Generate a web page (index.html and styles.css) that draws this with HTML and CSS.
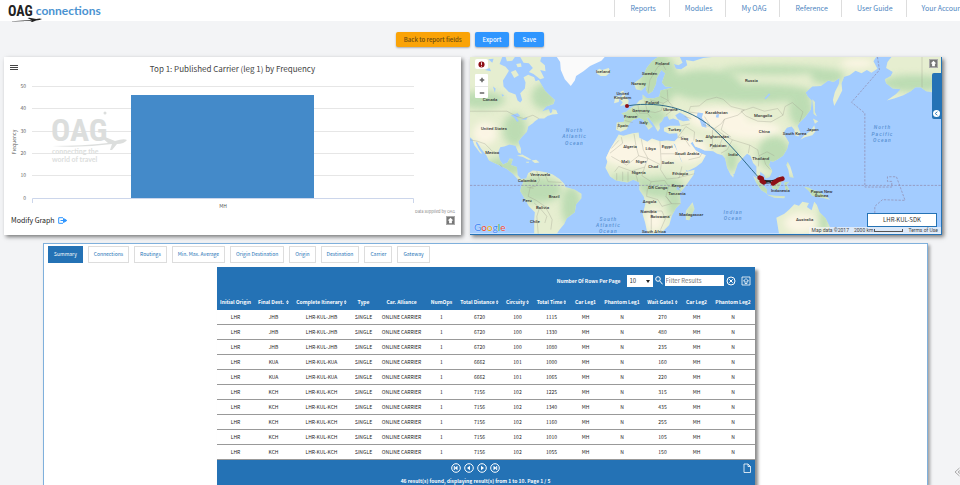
FILE: index.html
```html
<!DOCTYPE html>
<html lang="en">
  <head>
    <meta charset="UTF-8" />
    <meta name="viewport" content="width=device-width, initial-scale=1.0" />
    <title>OAG Connections</title>
    <link rel="stylesheet" href="styles.css">
  </head>
  <body>
    <header class="site-header">
      <a class="logo" href="#">
        <span class="logo-oag">OAG</span>
        <span class="logo-name">connections</span>
        <svg class="logo-plane" viewBox="0 0 36 5"><path d="M0 4.5 L24 3 L20 1 L22 .8 L29 2 Q33 1 35 2 Q33 3.500 29 3.500 L25 5 L23 5 L25 3.700 Z" /></svg>
      </a>
      <nav class="main-nav">
        <a href="#">Reports</a>
        <a href="#">Modules</a>
        <a href="#">My OAG</a>
        <a href="#">Reference</a>
        <a href="#">User Guide</a>
        <a href="#">Your Account</a>
      </nav>
    </header>

    <main>
      <div class="toolbar">
        <button class="btn btn-back" type="button">Back to report fields</button>
        <button class="btn" type="button">Export</button>
        <button class="btn" type="button">Save</button>
      </div>

      <div class="panels">
        <section class="card chart-card">
          <div class="chart-head">
            <button class="menu-btn" type="button" aria-label="Chart menu"><span></span><span></span><span></span></button>
            <h2>Top 1: Published Carrier (leg 1) by Frequency</h2>
          </div>
          <svg class="chart" viewBox="0 0 457 136">
            <g class="grid-lines">
              <path d="M28 7.500H410M28 29.500H410M28 52.500H410M28 74.500H410M28 96.500H410" />
            </g>
            <g class="watermark">
              <text class="wm-oag" x="47" y="62">OAG</text>
              <circle cx="101" cy="34" r="1.500" />
              <path d="M48 67 Q80 67 104 64 L97 58 L101 58 L111 62 Q120 59 123 61 Q120 65 113 65 L108 71 L106 71 L108 65 Q78 69 48 67Z" />
              <text class="wm-line" x="48" y="75">connecting the</text>
              <text class="wm-line" x="48" y="83">world of travel</text>
            </g>
            <rect class="bar" x="127" y="16" width="183" height="103" />
            <path class="axis" d="M28.500 124V119.500H409.500V124" />
            <g class="y-labels">
              <text x="22" y="9">50</text>
              <text x="22" y="31">40</text>
              <text x="22" y="54">30</text>
              <text x="22" y="76">20</text>
              <text x="22" y="98">10</text>
              <text x="22" y="121">0</text>
            </g>
            <text class="x-label" x="219" y="129">MH</text>
            <text class="y-title" transform="translate(12 63) rotate(-90)">Frequency</text>
            <text class="credit" x="451" y="134">Data supplied by OAG</text>
          </svg>
          <div class="chart-foot">
            <a class="modify" href="#">Modify Graph
              <svg viewBox="0 0 9 7"><path d="M5 .7H.7V6.300H5M2.500 3.500H6" /><path class="fill" d="M5.500 1.500L8.800 3.500L5.500 5.500Z" /></svg>
            </a>
            <button class="up-btn" type="button" aria-label="Move up">
              <svg viewBox="0 0 10 10"><path d="M5 1L9 5H7V9H3V5H1Z" /></svg>
            </button>
          </div>
        </section>

        <section class="card map-card">
          <svg class="map" viewBox="15 21 1416 531" preserveAspectRatio="xMidYMid slice">
            <defs>
              <filter id="soft" x="-10%" y="-10%" width="120%" height="120%"><feGaussianBlur stdDeviation="11" /></filter>
              <g id="land">
                <!-- Americas -->
                <path d="M15 21H112L104 42L122 50L132 62L124 76L114 92L116 110L132 126L152 134L158 152L166 158L172 150L166 130L180 116L182 98L176 82L190 74L208 82L212 94L222 90L230 104L240 122L252 134L270 150L266 162L244 170L232 184L252 178L256 190L272 180L279 192L262 194L248 198L238 206L222 206L210 214L204 220L190 230L186 246L170 262L160 276L168 296L168 312L160 308L152 288L134 284L118 290L106 292L100 306L104 330L114 344L128 338L134 326L144 328L138 346L156 352L158 376L168 388L184 386L190 370L204 362L222 364L246 368L264 374L284 388L298 402L302 412L330 420L350 432L350 446L334 464L330 488L306 506L298 524L284 540L276 552H208L208 510L210 488L192 470L180 448L166 424L170 408L176 396L160 390L144 372L126 358L98 344L72 332L64 316L48 296L36 276L32 278L42 298L52 312L46 310L28 286L22 268L15 262Z" />
                <path d="M122 21H150L142 32L126 34ZM166 21H230L226 34L240 46L242 64L226 60L238 84L226 88L206 72L192 66L204 54L192 40L176 38ZM138 66L152 60L162 76L148 84ZM154 42L168 40L170 50L158 52ZM262 178L274 180L278 192L262 190Z" />
                <path d="M156 318L172 314L190 324L200 330L190 330L174 322ZM200 332L214 330L224 338L210 340ZM184 336H192V339H184Z" />
                <!-- Europe, Asia and Africa -->
                <path d="M580 21H646L654 38L642 46L628 42L634 56L650 58L668 46L664 30L686 34L716 24L742 21H1236L1228 34L1240 56L1222 68L1208 60L1192 70L1174 62L1156 76L1140 80L1132 100L1134 122L1122 146L1110 168L1106 150L1112 126L1124 102L1126 84L1108 96L1092 92L1070 108L1044 110L1024 128L1030 140L1042 152L1040 178L1022 202L1006 218L1000 228L1008 248L1002 260L992 256L990 240L982 230L968 234L960 244L962 258L974 278L968 298L956 318L938 330L926 336L918 334L914 346L924 364L916 382L904 386L900 376L888 366L886 380L894 400L884 398L876 380L876 350L866 340L858 318L848 312L838 322L820 342L810 372L800 378L788 354L782 326L774 316L758 312L746 304L720 302L708 296L692 290L684 276L678 280L694 302L708 310L724 316L712 338L694 352L670 364L660 358L650 330L638 302L632 284L626 280L638 304L648 330L660 352L666 366L690 360L688 374L662 410L646 430L648 462L634 476L622 498L614 526L592 548L560 552L548 550L542 520L534 494L542 464L538 442L524 420L524 398L506 390L488 398L454 392L436 380L422 354L428 336L424 324L436 298L446 282L462 254L476 258L504 250L522 248L524 264L548 276L562 266L586 274L606 272L630 274L640 264L638 250L614 252L598 244L598 234L616 228L648 228L642 212L626 206L614 210L608 198L598 202L592 214L584 222L586 236L580 246L574 236L564 218L552 204L546 204L554 218L564 230L552 240L544 228L536 210L524 204L506 210L496 218L486 238L468 246L454 240L456 218L478 216L480 198L470 190L484 186L498 174L514 164L524 152L534 148L534 134L546 144L566 146L584 140L588 122L602 118L626 112L602 110L592 98L602 70L590 60L576 86L574 102L564 124L552 132L544 120L546 106L530 122L514 118L508 100L534 80L546 54L562 34Z" />
                <path d="M466 148L474 132L466 126L476 122L484 142L492 152L490 164L466 168L474 158ZM452 140L466 138L462 156L448 160Z" />
                <path d="M394 62L404 56L412 60L432 54L438 66L424 78L408 78L398 72Z" />
                <path d="M684 458L690 478L674 512L664 510L664 484Z" />
                <!-- South-east Asia, Japan, Australia -->
                <path d="M866 378L882 390L908 420L908 432L892 422L876 400ZM922 400L938 390L946 378L954 386L948 406L940 420L924 416ZM906 434L930 438L962 440L960 446L930 444ZM960 398L974 396L966 404L974 420L964 420ZM970 336L978 350L984 370L988 384L976 382L972 360L966 346ZM1020 412L1034 414L1044 420L1060 424L1084 440L1098 450L1080 446L1062 442L1044 438L1034 424ZM1046 206L1062 214L1052 222ZM1050 226L1054 244L1044 256L1022 262L1008 270L1020 256L1038 244ZM1044 148L1052 156L1052 186L1058 200L1048 192ZM800 374L808 376L806 384Z" />
                <path d="M936 504L960 492L974 480L990 464L1004 468L1014 456L1034 460L1028 472L1042 482L1050 456L1058 466L1066 488L1084 506L1096 530L1094 552H944Z" />
                <!-- Alaska -->
                <path d="M1282 21H1431V152L1416 138L1402 126L1386 124L1370 112L1354 112L1340 124L1318 136L1290 146L1268 152L1296 132L1310 118L1286 116L1266 100L1262 88L1280 78L1286 66L1266 54L1270 36Z" />
              </g>
              <mask id="landMask" maskUnits="userSpaceOnUse" x="15" y="21" width="1416" height="531"><use href="#land" fill="#fff" /></mask>
            </defs>

            <rect class="sea" x="15" y="21" width="1416" height="531" />
            <use class="land" href="#land" />
            <g mask="url(#landMask)">
              <g class="desert" filter="url(#soft)">
                <ellipse cx="520" cy="310" rx="120" ry="42" />
                <ellipse cx="670" cy="300" rx="60" ry="40" />
                <ellipse cx="760" cy="205" rx="90" ry="34" />
                <ellipse cx="860" cy="240" rx="90" ry="28" />
                <ellipse cx="60" cy="250" rx="36" ry="34" />
                <ellipse cx="570" cy="510" rx="26" ry="34" />
                <ellipse cx="1010" cy="520" rx="50" ry="30" />
                <ellipse cx="1180" cy="40" rx="50" ry="14" />
              </g>
              <g class="forest" filter="url(#soft)">
                <ellipse cx="50" cy="150" rx="70" ry="26" />
                <ellipse cx="150" cy="240" rx="36" ry="50" />
                <ellipse cx="240" cy="140" rx="40" ry="40" />
                <ellipse cx="120" cy="350" rx="60" ry="30" />
                <ellipse cx="220" cy="420" rx="70" ry="40" />
                <ellipse cx="320" cy="470" rx="30" ry="60" />
                <ellipse cx="590" cy="412" rx="70" ry="32" />
                <ellipse cx="490" cy="387" rx="60" ry="12" />
                <ellipse cx="630" cy="460" rx="22" ry="40" />
                <ellipse cx="530" cy="200" rx="80" ry="30" />
                <ellipse cx="580" cy="90" rx="60" ry="80" />
                <ellipse cx="720" cy="105" rx="110" ry="45" />
                <ellipse cx="880" cy="130" rx="170" ry="28" />
                <ellipse cx="930" cy="60" rx="160" ry="14" />
                <ellipse cx="930" cy="310" rx="50" ry="50" />
                <ellipse cx="1010" cy="180" rx="36" ry="50" />
                <ellipse cx="1090" cy="80" rx="50" ry="24" />
                <ellipse cx="800" cy="330" rx="20" ry="40" />
                <ellipse cx="940" cy="410" rx="90" ry="30" />
                <ellipse cx="1060" cy="430" rx="40" ry="20" />
                <ellipse cx="1350" cy="100" rx="100" ry="26" />
                <ellipse cx="1080" cy="510" rx="14" ry="50" />
                <ellipse cx="680" cy="490" rx="12" ry="30" />
              </g>
            </g>
            <path class="ice" d="M276 21L286 36L288 60L300 88L318 108L330 92L334 78L356 64L376 48L410 32L420 21Z" />
            <!-- Inland seas and lakes -->
            <path class="sea" d="M632 196L646 188L664 198L676 212L656 214L640 208ZM700 188L716 190L712 204L724 220L726 234L712 230L706 212L696 200ZM138 196L158 190L166 198L154 202L162 214L156 216L148 204ZM168 210L188 202L184 210ZM756 194L764 192L762 204L754 202ZM636 412L646 410L644 422L636 420ZM110 132L118 136L112 140ZM900 146L914 130L918 134L904 148ZM30 40L44 34L48 46L36 50ZM60 60L74 54L78 64ZM40 90L56 84L58 90ZM84 110L92 116L90 128ZM70 28L86 26L82 38Z" />
            <path class="borders" d="M15 184H126L156 200L176 206L204 196L222 206M15 270L36 274L60 282L78 300L90 312M104 344L112 352M216 364L224 392L212 410L196 412L190 440L214 452L240 470L252 490L262 510L258 540M186 412L206 416M240 372L250 396L290 398M208 460L224 474L216 500L220 552M224 474L246 500L240 520M462 272L440 296M470 262L474 280L436 310M440 320L486 346L522 318L514 288L508 252M522 318L550 326L586 344M530 268L536 300L550 326L540 352L500 364L462 350L450 366M586 274L590 340L588 360M590 312H640M540 352L532 378L560 396L600 392M588 360L606 388L644 384L652 350M456 370V392M474 366V394M490 366V396M510 362L520 396M560 396L548 420L546 440L580 450L592 470M600 392L612 410L604 440L622 462M612 410H634L650 426M604 440L620 462H648M542 484H592L602 508L588 540M560 486V540M592 470L620 462M592 504L620 496M640 384L690 372M640 264L656 260L676 290M640 262L664 230L690 246L688 272M650 228L676 222M672 330L706 322L712 310M458 238L462 218M480 212L504 218M502 174L520 196L516 206M520 166L524 190M540 152L548 184L572 188M524 190L548 190L560 204M556 150L596 160L590 182L572 188M588 140L608 150L630 176L604 196M596 160L614 150M608 120L610 150M550 130L556 90L580 50L600 40M590 36L604 60M660 200L680 206M700 190L672 186L678 170L704 168L726 150L756 142L776 148L800 170L840 180M736 226L720 200M716 224L750 236L770 222L780 208L820 196L840 180M744 240V296M750 236L778 256L764 290L740 296M778 256L804 270L788 300L770 310M804 270L856 286L852 310M830 184L866 172L900 184L940 176L956 196L920 216L880 214L844 198L830 184M956 196L962 170L984 158L1016 186L1006 216M856 286L880 300L884 318L908 306L930 318M884 318L882 350M896 320L904 344L918 360M780 208L770 240L800 262M1056 424V440M930 402L946 404M1374 21V112" />
            <path class="equator" d="M15 407H1431" />
            <path class="dateline" d="M1240 21L1246 60L1162 157L1202 190V412H1283V395H1270V381H1297L1323 452L1255 450L1232 470V490" />
            <path class="route" d="M487 168C600 150 690 185 750 240S860 360 885 385" />
            <path class="hop" d="M898 397L950 388M898 400L930 398L956 388M890 390L920 396" />
            <g class="stops">
              <circle cx="487" cy="168" r="6" />
              <path d="M886 384L892 386L892 394L898 398M926 401L936 394L942 390L954 387" />
            </g>

            <g class="places">
              <text x="75" y="152">Canada</text>
              <text x="87" y="240">United States</text>
              <text x="82" y="314">Mexico</text>
              <text x="226" y="380">Venezuela</text>
              <text x="187" y="396">Colombia</text>
              <text x="268" y="445">Brazil</text>
              <text x="187" y="456">Peru</text>
              <text x="233" y="478">Bolivia</text>
              <text x="210" y="521">Chile</text>
              <text x="415" y="70">Iceland</text>
              <text x="593" y="45">Finland</text>
              <text x="555" y="74">Sweden</text>
              <text x="522" y="104">Norway</text>
              <text x="474" y="135">United</text>
              <text x="474" y="148">Kingdom</text>
              <text x="563" y="163">Poland</text>
              <text x="529" y="186">Germany</text>
              <text x="618" y="184">Ukraine</text>
              <text x="498" y="205">France</text>
              <text x="475" y="230">Spain</text>
              <text x="537" y="221">Italy</text>
              <text x="630" y="244">Turkey</text>
              <text x="660" y="272">Iraq</text>
              <text x="704" y="278">Iran</text>
              <text x="496" y="296">Algeria</text>
              <text x="558" y="300">Libya</text>
              <text x="608" y="295">Egypt</text>
              <text x="668" y="315">Saudi Arabia</text>
              <text x="482" y="340">Mali</text>
              <text x="529" y="341">Niger</text>
              <text x="566" y="355">Chad</text>
              <text x="610" y="343">Sudan</text>
              <text x="522" y="374">Nigeria</text>
              <text x="647" y="377">Ethiopia</text>
              <text x="580" y="419">DR Congo</text>
              <text x="639" y="411">Kenya</text>
              <text x="637" y="437">Tanzania</text>
              <text x="555" y="461">Angola</text>
              <text x="552" y="489">Namibia</text>
              <text x="586" y="506">Botswana</text>
              <text x="680" y="498">Madagascar</text>
              <text x="568" y="550">South Africa</text>
              <text x="861" y="95">Russia</text>
              <text x="756" y="192">Kazakhstan</text>
              <text x="896" y="200">Mongolia</text>
              <text x="900" y="251">China</text>
              <text x="991" y="257">South Korea</text>
              <text x="1045" y="243">Japan</text>
              <text x="758" y="266">Afghanistan</text>
              <text x="761" y="291">Pakistan</text>
              <text x="806" y="318">India</text>
              <text x="889" y="330">Thailand</text>
              <text x="948" y="428">Indonesia</text>
              <text x="1072" y="430">Papua New</text>
              <text x="1072" y="442">Guinea</text>
              <text x="1021" y="514">Australia</text>
            </g>
            <g class="oceans">
              <text x="329" y="247">North</text>
              <text x="329" y="266">Atlantic</text>
              <text x="329" y="285">Ocean</text>
              <text x="431" y="513">South</text>
              <text x="431" y="532">Atlantic</text>
              <text x="431" y="550">Ocean</text>
              <text x="806" y="493">Indian</text>
              <text x="806" y="512">Ocean</text>
              <text x="1255" y="239">North</text>
              <text x="1255" y="258">Pacific</text>
              <text x="1255" y="277">Ocean</text>
            </g>
          </svg>

          <div class="map-controls">
            <button class="map-btn" type="button" aria-label="Alerts">
              <svg viewBox="0 0 8 8"><circle cx="4" cy="4" r="3.500" fill="#8e1016" /><path d="M4 1.500V4.500M4 5.500V6.500" stroke="#fff" /></svg>
            </button>
            <div class="zoom-group">
              <button type="button" aria-label="Zoom in"><svg viewBox="0 0 8 8"><path d="M1 4H7M4 1V7" /></svg></button>
              <button type="button" aria-label="Zoom out"><svg viewBox="0 0 8 8"><path d="M1 4H7" /></svg></button>
            </div>
          </div>
          <button class="up-btn map-up" type="button" aria-label="Move up">
            <svg viewBox="0 0 10 10"><path d="M5 1L9 5H7V9H3V5H1Z" /></svg>
          </button>
          <button class="drawer" type="button" aria-label="Open map options">
            <svg viewBox="0 0 8 8"><circle cx="4" cy="4" r="4" fill="#fff" /><path d="M5 2L2.500 4L5 6" fill="none" stroke="#2472b5" /></svg>
          </button>
          <div class="google"><span class="g-blue">G</span><span class="g-red">o</span><span class="g-yellow">o</span><span class="g-blue">g</span><span class="g-green">l</span><span class="g-red">e</span></div>
          <div class="route-label">LHR-KUL-SDK</div>
          <div class="map-credit">
            <span>Map data ©2017</span>
            <span class="scale">2000 km <i></i></span>
            <a href="#">Terms of Use</a>
          </div>
        </section>
      </div>

      <section class="results">
        <div class="tabs">
          <button class="tab active" type="button">Summary</button>
          <button class="tab" type="button">Connections</button>
          <button class="tab" type="button">Routings</button>
          <button class="tab" type="button">Min. Max. Average</button>
          <button class="tab" type="button">Origin Destination</button>
          <button class="tab" type="button">Origin</button>
          <button class="tab" type="button">Destination</button>
          <button class="tab" type="button">Carrier</button>
          <button class="tab" type="button">Gateway</button>
        </div>

        <div class="table-box">
          <div class="table-tools">
            <label for="rows">Number Of Rows Per Page</label>
            <span class="select-wrap">
              <select id="rows"><option>10</option><option>25</option><option>50</option></select>
            </span>
            <label class="search-label" for="filter" aria-label="Filter results">
              <svg viewBox="0 0 8 9"><circle cx="3" cy="3" r="2.300" /><path d="M4.800 5L7.500 8.300" /></svg>
            </label>
            <input id="filter" type="text" placeholder="Filter Results" />
            <button class="icon-btn clear" type="button" aria-label="Clear filter">
              <svg viewBox="0 0 10 10"><circle cx="5" cy="5" r="4" /><path d="M3.300 3.300L6.700 6.700M6.700 3.300L3.300 6.700" /></svg>
            </button>
            <button class="icon-btn" type="button" aria-label="Move up">
              <svg viewBox="0 0 10 10"><path class="thin" d="M1 1H9V9H1ZM5 2.500L7.500 5H6V7.500H4V5H2.500Z" /></svg>
            </button>
          </div>

          <table>
            <thead>
              <tr>
                <th>Initial Origin</th>
                <th>Final Dest. <i></i></th>
                <th>Complete Itinerary<i></i></th>
                <th>Type</th>
                <th>Car. Alliance</th>
                <th>NumOps</th>
                <th>Total Distance<i></i></th>
                <th>Circuity<i></i></th>
                <th>Total Time<i></i></th>
                <th>Car Leg1</th>
                <th>Phantom Leg1</th>
                <th>Wait Gate1<i></i></th>
                <th>Car Leg2</th>
                <th>Phantom Leg2</th>
              </tr>
            </thead>
            <tbody>
              <tr><td>LHR</td><td>JHB</td><td>LHR-KUL-JHB</td><td>SINGLE</td><td>ONLINE CARRIER</td><td>1</td><td>6720</td><td>100</td><td>1115</td><td>MH</td><td>N</td><td>270</td><td>MH</td><td>N</td></tr>
              <tr><td>LHR</td><td>JHB</td><td>LHR-KUL-JHB</td><td>SINGLE</td><td>ONLINE CARRIER</td><td>1</td><td>6720</td><td>100</td><td>1330</td><td>MH</td><td>N</td><td>480</td><td>MH</td><td>N</td></tr>
              <tr><td>LHR</td><td>JHB</td><td>LHR-KUL-JHB</td><td>SINGLE</td><td>ONLINE CARRIER</td><td>1</td><td>6720</td><td>100</td><td>1080</td><td>MH</td><td>N</td><td>235</td><td>MH</td><td>N</td></tr>
              <tr><td>LHR</td><td>KUA</td><td>LHR-KUL-KUA</td><td>SINGLE</td><td>ONLINE CARRIER</td><td>1</td><td>6662</td><td>101</td><td>1000</td><td>MH</td><td>N</td><td>160</td><td>MH</td><td>N</td></tr>
              <tr><td>LHR</td><td>KUA</td><td>LHR-KUL-KUA</td><td>SINGLE</td><td>ONLINE CARRIER</td><td>1</td><td>6662</td><td>101</td><td>1065</td><td>MH</td><td>N</td><td>220</td><td>MH</td><td>N</td></tr>
              <tr><td>LHR</td><td>KCH</td><td>LHR-KUL-KCH</td><td>SINGLE</td><td>ONLINE CARRIER</td><td>1</td><td>7156</td><td>102</td><td>1225</td><td>MH</td><td>N</td><td>315</td><td>MH</td><td>N</td></tr>
              <tr><td>LHR</td><td>KCH</td><td>LHR-KUL-KCH</td><td>SINGLE</td><td>ONLINE CARRIER</td><td>1</td><td>7156</td><td>102</td><td>1340</td><td>MH</td><td>N</td><td>435</td><td>MH</td><td>N</td></tr>
              <tr><td>LHR</td><td>KCH</td><td>LHR-KUL-KCH</td><td>SINGLE</td><td>ONLINE CARRIER</td><td>1</td><td>7156</td><td>102</td><td>1160</td><td>MH</td><td>N</td><td>255</td><td>MH</td><td>N</td></tr>
              <tr><td>LHR</td><td>KCH</td><td>LHR-KUL-KCH</td><td>SINGLE</td><td>ONLINE CARRIER</td><td>1</td><td>7156</td><td>102</td><td>1010</td><td>MH</td><td>N</td><td>105</td><td>MH</td><td>N</td></tr>
              <tr><td>LHR</td><td>KCH</td><td>LHR-KUL-KCH</td><td>SINGLE</td><td>ONLINE CARRIER</td><td>1</td><td>7156</td><td>102</td><td>1055</td><td>MH</td><td>N</td><td>150</td><td>MH</td><td>N</td></tr>
            </tbody>
          </table>

          <div class="table-foot">
            <div class="pager">
              <button class="icon-btn" type="button" aria-label="First page"><svg viewBox="0 0 10 10"><circle cx="5" cy="5" r="4.300" /><path class="solid" d="M6.500 2.800V7.200L3.500 5Z" /><path d="M3.300 3V7" /></svg></button>
              <button class="icon-btn" type="button" aria-label="Previous page"><svg viewBox="0 0 10 10"><circle cx="5" cy="5" r="4.300" /><path class="solid" d="M6 2.800V7.200L3 5Z" /></svg></button>
              <button class="icon-btn" type="button" aria-label="Next page"><svg viewBox="0 0 10 10"><circle cx="5" cy="5" r="4.300" /><path class="solid" d="M4 2.800V7.200L7 5Z" /></svg></button>
              <button class="icon-btn" type="button" aria-label="Last page"><svg viewBox="0 0 10 10"><circle cx="5" cy="5" r="4.300" /><path class="solid" d="M3.500 2.800V7.200L6.500 5Z" /><path d="M6.700 3V7" /></svg></button>
            </div>
            <button class="icon-btn export-file" type="button" aria-label="Export file"><svg viewBox="0 0 10 10"><path class="thin" d="M2 1H6L8.500 3.500V9.500H2ZM6 1V3.500H8.500" /></svg></button>
            <p>46 result(s) found, displaying result(s) from 1 to 10. Page 1 / 5</p>
          </div>
        </div>
      </section>
    </main>

    <button class="side-toggle" type="button" aria-label="Open side panel">
      <svg viewBox="0 0 6 10"><path d="M5.500 1L1 5L5.500 9M6 3.500L4 5L6 6.500" /></svg>
    </button>
  </body>
</html>
```
FILE: styles.css
```css
* {
  box-sizing: border-box;
}

body {
  margin: 0;
  background: #f3f4f6;
  font-family: "Noto Sans CJK SC", "Noto Sans", sans-serif;
  font-size: 5px;
  line-height: 8px;
  color: #444;
  overflow-x: hidden;
}

a {
  text-decoration: none;
}

button,
input,
select {
  font-family: inherit;
  font-size: inherit;
  line-height: inherit;
  margin: 0;
  padding: 0;
  border: none;
  background: none;
}

svg {
  display: block;
}

/* header */
.site-header {
  display: grid;
  grid-template-columns: 64% auto;
  height: 21px;
  background: #fff;
}

.logo {
  position: relative;
  display: flex;
  align-items: center;
  gap: 3px;
  padding-left: 8px;
}

.logo-oag {
  font-family: "Roboto Condensed", "Liberation Sans Narrow", "Open Sans Condensed", "Liberation Sans", sans-serif;
  font-size: 14px;
  line-height: 16px;
  font-weight: 700;
  color: #222;
}

.logo-name {
  font-family: Lato, sans-serif;
  font-size: 12px;
  line-height: 16px;
  font-weight: 700;
  color: #4b93d1;
}

.logo-plane {
  position: absolute;
  left: 8px;
  top: 17px;
  width: 35px;
  height: 5px;
  fill: #222;
}

.main-nav {
  display: flex;
}

.main-nav a {
  flex: none;
  height: 17px;
  padding: 0 13px 0 15px;
  border-left: 1px solid #ddd;
  font-size: 7px;
  line-height: 17px;
  color: #4b84c0;
}

/* buttons above the panels */
.toolbar {
  display: flex;
  justify-content: center;
  gap: 5px;
  padding: 11px 20px 10px 0;
}

.btn {
  height: 15px;
  padding: 0 8px;
  border-radius: 2px;
  background: #2f96ff;
  color: #fff;
  font-size: 6px;
  font-weight: 500;
  line-height: 15px;
  box-shadow: 0 1px 2px rgba(0, 0, 0, 0.3);
}

.btn-back {
  background: #faa307;
  color: #6b4a10;
}

/* chart and map */
.panels {
  display: grid;
  grid-template-columns: 457fr 472fr;
  gap: 9px;
  padding: 0 18px 0 4px;
}

.card {
  position: relative;
  min-width: 0;
  background: #fff;
  box-shadow: 2px 2px 4px rgba(0, 0, 0, 0.5);
}

.chart-card {
  display: flex;
  flex-direction: column;
}

.chart-head {
  display: flex;
  align-items: center;
  padding: 5px 14px 3px 6px;
}

.chart-head h2 {
  flex: 1;
  margin: 0;
  font-size: 8px;
  line-height: 14px;
  font-weight: 400;
  text-align: center;
}

.menu-btn {
  display: flex;
  flex-direction: column;
  align-self: flex-start;
  gap: 1px;
  width: 8px;
  padding-top: 3px;
}

.menu-btn span {
  height: 1px;
  background: #444;
}

.chart {
  width: 100%;
}

.grid-lines {
  stroke: #e6e6e6;
}

.bar {
  fill: #448ac9;
}

.axis {
  fill: none;
  stroke: #ccd6eb;
}

.y-labels {
  font-size: 5px;
  fill: #666;
  text-anchor: end;
}

.x-label,
.y-title {
  font-size: 5px;
  fill: #555;
  text-anchor: middle;
}

.credit {
  font-size: 4px;
  fill: #888;
  text-anchor: end;
}

.watermark {
  fill: #dcdedd;
}

.wm-oag {
  font-family: "Roboto Condensed", "Liberation Sans Narrow", "Open Sans Condensed", "Liberation Sans", sans-serif;
  font-size: 32px;
  font-weight: 700;
}

.wm-line {
  font-family: Lato, sans-serif;
  font-size: 7px;
  font-weight: 700;
}

.chart-foot {
  display: flex;
  align-items: center;
  justify-content: space-between;
  padding: 0 6px 0 7px;
}

.modify {
  display: flex;
  align-items: center;
  gap: 3px;
  font-size: 7px;
  line-height: 10px;
  color: #222;
}

.modify svg {
  width: 9px;
  height: 7px;
  fill: none;
  stroke: #2f96ff;
}

.modify .fill {
  fill: #2f96ff;
}

.up-btn {
  width: 9px;
  height: 9px;
  background: #777;
  border: 1px solid #aaa;
}

.up-btn svg {
  width: 7px;
  height: 7px;
  fill: #fff;
}

.map-card {
  overflow: hidden;
  border-right: 1px solid #2472b5;
  border-bottom: 1px solid #2472b5;
}

.map {
  width: 100%;
}

.sea {
  fill: #a3ccff;
}

.land {
  fill: #e6eed0;
}

.forest {
  fill: #b5d9ae;
  opacity: 0.85;
}

.desert {
  fill: #fbf5e4;
}

.ice {
  fill: #fafafa;
}

.borders {
  fill: none;
  stroke: #9c9c8c;
  stroke-width: 1;
}

.equator,
.dateline {
  fill: none;
  stroke: #8f87a8;
  stroke-width: 2;
  stroke-dasharray: 7 4;
}

.route,
.hop {
  fill: none;
  stroke: #2f6a87;
  stroke-width: 3;
}

.hop {
  stroke: #222;
  stroke-width: 4;
}

.stops circle {
  fill: #8e1016;
}

.stops path {
  fill: none;
  stroke: #8e1016;
  stroke-width: 14;
  stroke-linejoin: round;
  stroke-linecap: round;
}

.places {
  font-family: Roboto, sans-serif;
  font-size: 13px;
  font-weight: 500;
  fill: #333;
  text-anchor: middle;
}

.oceans {
  font-family: Roboto, sans-serif;
  font-size: 15px;
  font-style: italic;
  font-weight: 500;
  letter-spacing: 3px;
  fill: #5790d2;
  text-anchor: middle;
}

/* controls lying over the map */
.map-controls {
  position: absolute;
  left: 5px;
  top: 2px;
  display: flex;
  flex-direction: column;
  gap: 5px;
  width: 13px;
}

.map-btn {
  display: flex;
  align-items: center;
  justify-content: center;
  height: 10px;
  border-radius: 2px;
  background: #fff;
}

.map-btn svg {
  width: 7px;
  height: 7px;
}

.zoom-group {
  background: #fff;
  border-radius: 1px;
}

.zoom-group button {
  display: flex;
  align-items: center;
  justify-content: center;
  width: 100%;
  height: 12px;
}

.zoom-group button + button {
  border-top: 1px solid #e6e6e6;
}

.zoom-group svg {
  width: 6px;
  height: 6px;
  stroke: #666;
  stroke-width: 2;
}

.map-up {
  position: absolute;
  right: 3px;
  top: 2px;
}

.drawer {
  position: absolute;
  right: 0;
  top: 16px;
  display: flex;
  align-items: flex-end;
  justify-content: center;
  width: 9px;
  height: 46px;
  padding-bottom: 2px;
  border-radius: 2px 0 0 2px;
  background: #2472b5;
}

.drawer svg {
  width: 7px;
  height: 7px;
}

.google {
  position: absolute;
  left: 4px;
  bottom: 1px;
  font-family: Lato, sans-serif;
  font-size: 10px;
  line-height: 11px;
  text-shadow: 0 0 1px #fff;
}

.g-blue {
  color: #4285f4;
}

.g-red {
  color: #ea4335;
}

.g-yellow {
  color: #e5a800;
}

.g-green {
  color: #34a853;
}

.route-label {
  position: absolute;
  right: 4px;
  bottom: 7px;
  width: 70px;
  border: 1px solid #2472b5;
  background: #fff;
  font-size: 6px;
  line-height: 12px;
  text-align: center;
  color: #333;
}

.map-credit {
  position: absolute;
  right: 0;
  bottom: 0;
  display: flex;
  gap: 5px;
  padding: 0 3px;
  background: rgba(245, 245, 245, 0.7);
  font-family: Roboto, sans-serif;
  line-height: 7px;
  color: #444;
}

.map-credit a {
  color: #444;
}

.scale {
  display: flex;
  align-items: center;
  gap: 1px;
}

.scale i {
  width: 29px;
  height: 3px;
  border: 1px solid #555;
  border-top: none;
}

/* results */
.results {
  margin: 8px 32px 0 43px;
  padding: 2px 4px 0;
  border: 1px solid #7fb0dc;
  border-bottom: none;
  background: #fff;
  box-shadow: 2px 2px 3px rgba(0, 0, 0, 0.35);
}

.tabs {
  display: flex;
  gap: 5px;
}

.tab {
  height: 17px;
  padding: 0 5px;
  border: 1px solid #ddd;
  color: #2472b5;
}

.tab.active {
  border-color: #2472b5;
  background: #2472b5;
  color: #fff;
}

.table-box {
  width: 61%;
  min-width: 538px;
  margin: 4px auto 0;
  background: #2472b5;
  color: #fff;
  box-shadow: 3px 3px 3px rgba(0, 0, 0, 0.45);
}

.table-tools {
  display: flex;
  align-items: center;
  justify-content: flex-end;
  height: 28px;
  padding-right: 4px;
  font-weight: 700;
}

.select-wrap {
  position: relative;
  margin: 0 2px 0 6px;
}

.select-wrap::after {
  content: "";
  position: absolute;
  right: 3px;
  top: 5px;
  border: 2px solid transparent;
  border-top: 3px solid #222;
  border-bottom: none;
}

.table-tools select {
  display: block;
  appearance: none;
  width: 26px;
  height: 12px;
  padding-left: 3px;
  background: #fff;
  color: #333;
}

.table-tools input {
  width: 59px;
  height: 11px;
  padding: 0 1px;
  background: #fff;
}

.table-tools select,
.table-tools input {
  font-size: 6px;
}

.table-tools input::placeholder {
  color: #777;
  opacity: 1;
}

.search-label svg {
  width: 8px;
  height: 9px;
  margin-right: 2px;
  fill: none;
  stroke: #fff;
}

.icon-btn svg {
  width: 10px;
  height: 10px;
  fill: none;
  stroke: #fff;
}

.icon-btn .solid {
  fill: #fff;
  stroke: none;
}

.icon-btn .thin {
  stroke-width: 0.8;
}

.clear {
  margin: 0 5px 0 2px;
}

table {
  width: 100%;
  table-layout: fixed;
  border-collapse: collapse;
}

th,
td {
  height: 15px;
  padding: 0;
  text-align: center;
  white-space: nowrap;
}

th {
  width: 38px;
  font-weight: 700;
}

th:nth-child(3) {
  width: 58px;
}

th:nth-child(4) {
  width: 26px;
}

th:nth-child(5) {
  width: 50px;
}

th:nth-child(6),
th:nth-child(8),
th:nth-child(10),
th:nth-child(13) {
  width: 30px;
}

th:nth-child(7) {
  width: 46px;
}

th:nth-child(11),
th:nth-child(14) {
  width: 43px;
}

/* sort arrows */
th i {
  display: inline-block;
  width: 3px;
  height: 4px;
  margin-left: 1px;
  background: #fff;
  clip-path: polygon(50% 0, 100% 40%, 0 40%, 0 60%, 100% 60%, 50% 100%, 0 60%, 0 40%);
}

td {
  border-bottom: 1px solid #999;
  background: #fff;
  color: #222;
}

.table-foot {
  display: grid;
  grid-template-columns: 1fr auto 1fr 20px;
  align-items: center;
  padding-top: 3px;
}

.pager {
  grid-column: 2;
  display: flex;
  gap: 3px;
}

.export-file {
  grid-column: 4;
  justify-self: end;
  margin-right: 3px;
}

.table-foot p {
  grid-column: 1 / 4;
  margin: 4px 0 0;
  font-weight: 700;
  text-align: center;
}

.side-toggle {
  position: fixed;
  right: 0;
  bottom: 8px;
}

.side-toggle svg {
  width: 6px;
  height: 10px;
  fill: none;
  stroke: #aaa;
}
```
